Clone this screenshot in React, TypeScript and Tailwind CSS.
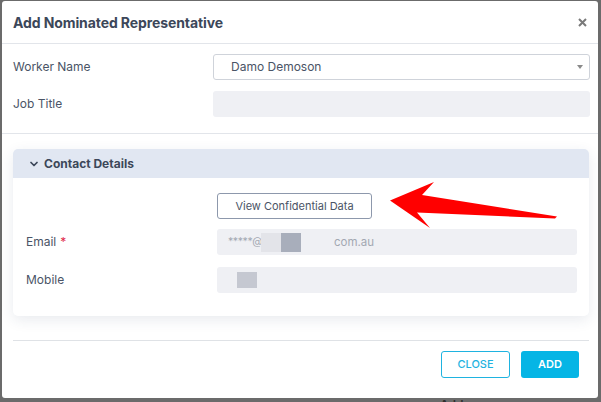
import { ChevronDown } from 'lucide-react';

/* Add Nominated Representative — modal with masked contact details. */

function Field({ label, required, children }: { label: string; required?: boolean; children: React.ReactNode }) {
  return (
    <div className="flex items-center">
      <div className="w-[191px] shrink-0 text-[12px] text-[#4a5466]">
        {label}
        {required && <span className="ml-1 text-[#e0284a]">*</span>}
      </div>
      {children}
    </div>
  );
}

export default function App() {
  return (
    <div className="relative w-[601px] h-[402px] overflow-hidden bg-[#6b6b6b] pt-px pl-[2px] font-['Inter',sans-serif]">
      <div className="w-[596px] h-[397px] bg-white rounded-[3px] flex flex-col">
        {/* Header */}
        <div className="h-[43px] shrink-0 border-b border-[#e2e5ea] pl-[11px] pr-[11px] flex items-center justify-between">
          <h2 className="text-[14px] font-bold text-[#3c4759] tracking-[-0.1px]">Add Nominated Representative</h2>
          <svg width="9" height="9" viewBox="0 0 9 9" className="text-[#7a7a7a]">
            <path d="M1 1 L8 8 M8 1 L1 8" stroke="currentColor" strokeWidth="2" />
          </svg>
        </div>

        {/* Worker fields */}
        <div className="pt-[10px] pb-[16px] pl-[11px] pr-[8px] border-b border-[#e2e5ea] flex flex-col gap-[11px]">
          <div className="flex items-center">
            <div className="w-[200px] shrink-0 text-[12px] text-[#4a5466]">Worker Name</div>
            <div className="flex-1 h-[26px] rounded-[3px] border border-[#cfd3da] flex items-center justify-between pl-[17px] pr-[6px]">
              <span className="text-[12px] text-[#4a5466]">Damo Demoson</span>
              <span className="w-0 h-0 border-l-[3px] border-r-[3px] border-t-[4px] border-l-transparent border-r-transparent border-t-[#8a8a8a]" />
            </div>
          </div>
          <div className="flex items-center">
            <div className="w-[200px] shrink-0 text-[12px] text-[#4a5466]">Job Title</div>
            <div className="flex-1 h-[26px] rounded-[3px] bg-[#eff0f4]" />
          </div>
        </div>

        {/* Contact details card */}
        <div className="mt-[15px] ml-[11px] mr-[9px] h-[167px] rounded-[5px] bg-white shadow-[0_4px_14px_rgba(40,60,100,0.10)] overflow-hidden">
          <div className="h-[29px] bg-[#e1e7f2] flex items-center gap-[4px] pl-[15px]">
            <ChevronDown size={12} strokeWidth={3.5} className="text-[#3c4759]" />
            <span className="text-[12px] font-bold text-[#3c4759]">Contact Details</span>
          </div>
          <div className="pt-[14px] pl-[13px] pr-[12px] flex flex-col">
            <div className="pl-[191px]">
              <button className="w-[155px] h-[26px] rounded-[3px] border border-[#8d98ac] text-[11px] text-[#4a5466] bg-white">
                View Confidential Data
              </button>
            </div>
            <div className="mt-[10px]">
              <Field label="Email" required>
                <div className="flex-1 h-[26px] rounded-[3px] bg-[#eff0f4] flex items-center pl-[11px] text-[11.5px] text-[#a3a8b2]">
                  <span className="w-[33px] overflow-hidden whitespace-nowrap text-[10.5px] tracking-[-0.4px]">*****@</span>
                  <span className="w-[20px] h-[19px] bg-[#e3e4e9]" />
                  <span className="w-[20px] h-[19px] bg-[#a8aebb]" />
                  <span className="ml-[33px]">com.au</span>
                </div>
              </Field>
            </div>
            <div className="mt-[12px]">
              <Field label="Mobile">
                <div className="flex-1 h-[26px] rounded-[3px] bg-[#eff0f4] flex items-center pl-[20px]">
                  <span className="w-[20px] h-[16px] bg-[#c5c8d1]" />
                </div>
              </Field>
            </div>
          </div>
        </div>

        {/* Footer */}
        <div className="mt-[24px] ml-[11px] mr-[9px] border-t border-[#dfe2e6]" />
        <div className="pt-[10px] pr-[19px] flex justify-end gap-[11px]">
          <button className="w-[69px] h-[27px] rounded-[3px] border border-[#1fb3e0] text-[11px] font-medium text-[#1fb3e0] bg-white">
            CLOSE
          </button>
          <button className="w-[58px] h-[27px] rounded-[3px] bg-[#05b5e5] text-[11px] font-semibold text-white">
            ADD
          </button>
        </div>
      </div>

      {/* Page content peeking below the modal */}
      <div className="pl-[438px] text-[12px] font-semibold text-[#2d2d2d] leading-[14px]">Address</div>

      {/* Annotation arrow */}
      <svg className="absolute left-0 top-0 pointer-events-none" width="601" height="402" viewBox="0 0 601 402">
        <polygon
          points="390,200.5 434,182 422,195 557,216.5 555,218.5 417,212.5 430,228"
          fill="#ff0000"
        />
      </svg>
    </div>
  );
}
